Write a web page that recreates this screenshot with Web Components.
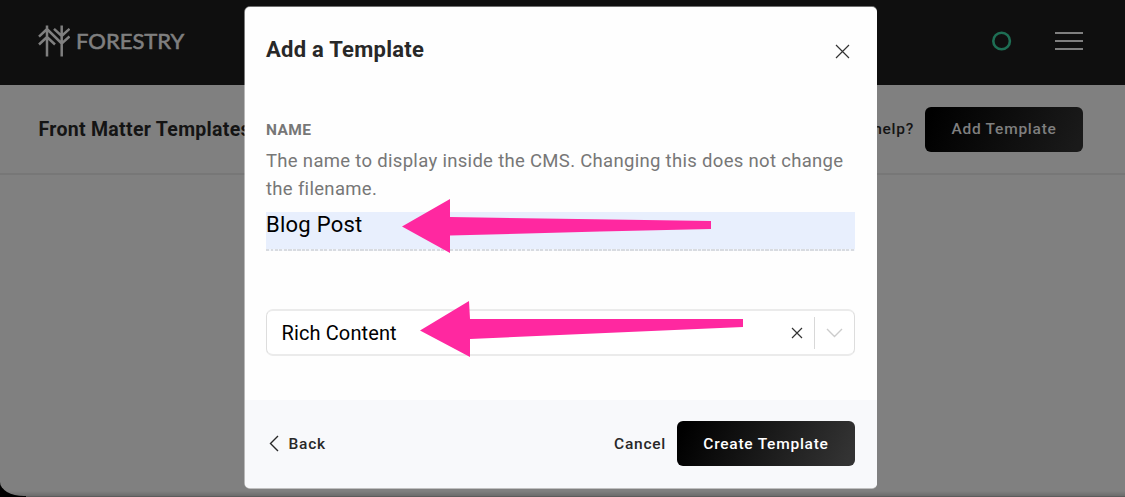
<!DOCTYPE html>
<html lang="en">
<head>
<meta charset="utf-8">
<title>Forestry – Add a Template</title>
<style>
html,body{margin:0;height:100%;overflow:hidden;background:#000}
body{font-family:Roboto,"Liberation Sans",sans-serif;color:#282828}
</style>
</head>
<body>
<forestry-app></forestry-app>
<script>
const define = (name, html) => {
  const t = document.createElement('template');
  t.innerHTML = html;
  customElements.define(name, class extends HTMLElement {
    constructor() {
      super();
      this.attachShadow({ mode: 'open' }).append(t.content.cloneNode(true));
    }
  });
};

define('forestry-logo', `
<style>
:host{display:flex;align-items:center;color:#7f7f7f}
svg{display:block}
span{font:400 22px/30px Lato,sans-serif;-webkit-text-stroke:.6px currentColor;letter-spacing:0;margin:0 0 1px 6px;white-space:nowrap}
</style>
<svg width="32" height="32" viewBox="38 25 32 32" fill="none" stroke="currentColor" stroke-width="2.5">
<path d="M47 25.5V56.5M61.7 25.5V56.5M39 36.7L47 29L61.7 43.5L69.5 36.5M39 44.5L47 37L55 44.5M54 28.8L61.7 36L69.5 28.8"/>
</svg><span>FORESTRY</span>`);

define('top-bar', `
<style>
:host{display:flex;align-items:center;height:85px;box-sizing:border-box;padding:0 42px 3px 38px;background:#0f0f0f}
.ring{display:block;margin-left:auto}
.menu{margin-left:43px;width:28px;display:grid;gap:6px}
.menu i{height:2px;background:#7f7f7f}
</style>
<forestry-logo></forestry-logo><svg class="ring" width="20" height="20"><circle cx="9.6" cy="10" r="8.3" fill="none" stroke="#1e6e54" stroke-width="2.6"/></svg><div class="menu"><i></i><i></i><i></i></div>`);

define('dark-button', `
<style>
:host{display:flex;align-items:center;justify-content:center;box-sizing:border-box;height:45px;border-radius:6px;
background:linear-gradient(115deg,var(--from,#000) 5%,var(--to,#333) 95%);color:var(--ink,#fff);
font-size:15.5px;font-weight:500;letter-spacing:.75px;white-space:nowrap;padding-bottom:var(--drop,1px)}
</style><slot></slot>`);

define('page-header', `
<style>
:host{display:flex;align-items:center;height:90px;box-sizing:border-box;padding:0 42px 0 38.5px;border-bottom:2px solid #777;color:#141414}
h1{font-size:19.5px;font-weight:700;letter-spacing:.3px;margin:0 auto 0 0}
.help{font-size:15.5px;font-weight:500;letter-spacing:.75px;margin-right:11px}
dark-button{width:158px;--to:#1a1a1a;--ink:#7f7f7f}
</style>
<h1><slot></slot></h1><span class="help">Need help?</span><dark-button>Add Template</dark-button>`);

define('text-field', `
<style>
:host{display:block}
label{display:block;font-size:15.5px;line-height:20px;font-weight:700;letter-spacing:.4px;color:#777}
p{margin:7px 0 9px;font-size:18.5px;line-height:28px;letter-spacing:.31px;color:#777}
.value{height:39px;box-sizing:border-box;
background:repeating-linear-gradient(90deg,#d8dbe0 0 3px,#f3f6fc 3px 4.5px) 0 100%/100% 2px no-repeat,#e8effd;
font-size:22px;line-height:26px;letter-spacing:.25px;color:#000}
</style>
<label>NAME</label><p>The name to display inside the CMS. Changing this does not change the filename.</p><div class="value"><slot></slot></div>`);

define('select-field', `
<style>
:host{display:flex;align-items:center;height:47px;box-sizing:border-box;border:solid;border-width:2px 1px;border-color:#ebebeb #ddd;border-radius:7px;background:#fff;padding-left:14.5px;font-size:20px;letter-spacing:.12px;color:#000}
.x{margin-left:auto}
svg{display:block;fill:none}
.bar{width:1px;height:32px;background:#d8d8d8;margin:0 11px}
.chev{margin-right:11px}
</style>
<slot></slot>
<svg class="x" width="12" height="12" stroke="#333" stroke-width="1.2"><path d="M1 1L11 11M11 1L1 11"/></svg>
<div class="bar"></div>
<svg class="chev" width="17" height="10" stroke="#ccc" stroke-width="1.4"><path d="M1 1L8.5 8.5L16 1"/></svg>`);

define('template-modal', `
<style>
:host{display:flex;flex-direction:column;width:632px;height:481px;border-radius:5px;overflow:hidden;background:#fefefe;
box-shadow:-1px 0 rgba(255,255,255,.45),0 -1px rgba(255,255,255,.4),0 1px rgba(255,255,255,.5)}
header{display:flex;justify-content:space-between;padding:29px 27px 0 21px}
h2{margin:0;font-size:22px;line-height:28px;font-weight:700;letter-spacing:.25px}
header svg{margin-top:8px}
svg{display:block;fill:none}
main{flex:1;padding:56px 22px 0 21px}
select-field{margin-top:58px}
footer{display:flex;align-items:center;height:88px;box-sizing:border-box;background:#f8f9fb;padding:0 22px 1px 24px;font-size:15.5px;font-weight:500;letter-spacing:.75px}
.back{display:flex;align-items:center;gap:9.5px;margin-right:auto}
.cancel{margin-right:11px}
dark-button{width:178px;--drop:0}
</style>
<header><h2>Add a Template</h2><svg width="15" height="15" stroke="#333" stroke-width="1.2"><path d="M1 1L14 14M14 1L1 14"/></svg></header>
<main><text-field>Blog Post</text-field><select-field>Rich Content</select-field></main>
<footer><span class="back"><svg width="10" height="17" stroke="#282828" stroke-width="1.4"><path d="M9 1L1.5 8.5L9 16"/></svg>Back</span><span class="cancel">Cancel</span><dark-button>Create Template</dark-button></footer>`);

define('pointer-arrows', `
<style>:host{position:absolute;inset:0;pointer-events:none}svg{display:block}</style>
<svg width="1125" height="497" fill="#ff28a0">
<path d="M402 226.5L450 199V217L595 219.2L711 221V229L600 231.5L450 235.5V253Z"/>
<path d="M420 330.5L469 301L470 319H743V327L470 339V357Z"/>
</svg>`);

define('forestry-app', `
<style>
:host{display:block;position:relative;width:1125px;height:497px;overflow:hidden;background:#000}
.page{height:496px;background:linear-gradient(#808080 0,#808080 491px,#6c6c6c 496px);border-bottom-left-radius:24px 14px;overflow:hidden}
.edge{height:1px;margin-left:26px;background:#5c5c5c}
template-modal{position:absolute;left:245px;top:7px}
</style>
<div class="page"><top-bar></top-bar><page-header>Front Matter Templates</page-header></div><div class="edge"></div>
<template-modal></template-modal>
<pointer-arrows></pointer-arrows>`);
</script>
</body>
</html>
